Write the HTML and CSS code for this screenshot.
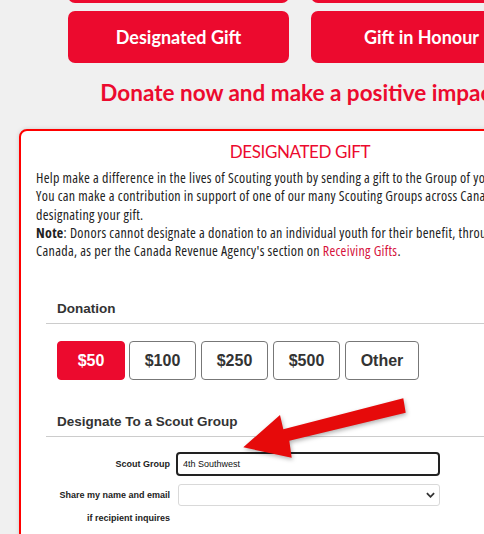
FILE: index.html
```html
<!DOCTYPE html>
<html lang="en">
<head>
    <meta charset="UTF-8">
    <meta name="viewport" content="width=device-width, initial-scale=1.0">
    <title>Designated Gift</title>
    <link rel="stylesheet" href="styles.css">
</head>
<body>
    <div class="page">
        <div class="gift-types">
            <a class="gift-btn" href="#">One-Time Gift</a>
            <a class="gift-btn" href="#">Monthly Gift</a>
            <a class="gift-btn" href="#">Designated Gift</a>
            <a class="gift-btn" href="#">Gift in Honour</a>
        </div>

        <h1 class="tagline">Donate now and make a positive impact</h1>

        <div class="card">
            <h2 class="card-title">DESIGNATED GIFT</h2>
            <p class="intro">
                Help make a difference in the lives of Scouting youth by sending a gift to the Group of your choice.<br>
                You can make a contribution in support of one of our many Scouting Groups across Canada by<br>
                designating your gift.<br>
                <b>Note</b>: Donors cannot designate a donation to an individual youth for their benefit, through Scouts<br>
                Canada, as per the Canada Revenue Agency's section on <a href="#">Receiving Gifts</a>.
            </p>

            <div class="form-section">
                <h3 class="section-title">Donation</h3>
                <div class="amounts">
                    <button class="amount active">$50</button>
                    <button class="amount">$100</button>
                    <button class="amount">$250</button>
                    <button class="amount">$500</button>
                    <button class="amount other">Other</button>
                </div>
            </div>

            <div class="form-section">
                <h3 class="section-title">Designate To a Scout Group</h3>
                <div class="field">
                    <label for="group">Scout Group</label>
                    <input id="group" class="text-input" type="text" value="4th Southwest">
                </div>
                <div class="field">
                    <label for="share">Share my name and email<br>if recipient inquires</label>
                    <div class="select-wrap">
                        <select id="share" class="select-input">
                            <option></option>
                            <option>Yes</option>
                            <option>No</option>
                        </select>
                        <svg class="chevron" viewBox="0 0 10 6"><path d="M1 1l4 4 4-4" fill="none" stroke="#333" stroke-width="2"/></svg>
                    </div>
                </div>
            </div>
        </div>
    </div>

    <!-- annotation arrow -->
    <svg class="arrow" viewBox="0 0 484 534">
        <polygon points="403.3,398.3 405.7,412.7 289.3,440.7 291.7,457.7 243.3,447.3 280,415 283.3,429.3" />
    </svg>
</body>
</html>
```

FILE: styles.css
```css
body {
    margin: 0;
    background: #f0f0f0;
    overflow: hidden;
    font-family: "Liberation Sans", Arial, sans-serif;
    color: #222;
}

.page {
    width: 562px;
    margin-left: 19px;
}

.gift-types {
    display: grid;
    grid-template-columns: 221px 221px;
    justify-content: center;
    gap: 8px 22px;
    margin-top: -49px;
}

.gift-btn {
    display: flex;
    align-items: center;
    justify-content: center;
    height: 52px;
    border-radius: 7px;
    background: #ec0a2e;
    color: #fff;
    font-family: Lato, "Open Sans", sans-serif;
    font-weight: bold;
    font-size: 18px;
    text-decoration: none;
}

.tagline {
    margin: 17px 0 0;
    text-align: center;
    white-space: nowrap;
    font-family: Lato, "Open Sans", sans-serif;
    font-size: 22.5px;
    line-height: 26px;
    color: #ec0a2e;
}

.card {
    margin-top: 23px;
    padding: 10px 15px 30px;
    background: #fff;
    border: 2px solid #ff0000;
    border-radius: 8px;
    box-shadow: 0 0 4px rgba(0, 0, 0, 0.15);
}

.card-title {
    margin: 0;
    text-align: center;
    font-family: Lato, "Open Sans", sans-serif;
    font-weight: normal;
    font-size: 17px;
    letter-spacing: -0.4px;
    line-height: 21px;
    color: #ec0a2e;
}

.intro {
    margin: 7px 0 0;
    font-family: "Liberation Sans Narrow", "Open Sans", sans-serif;
    font-stretch: condensed;
    font-size: 14px;
    letter-spacing: 0.3px;
    line-height: 18.3px;
    white-space: nowrap;
}

.intro a {
    color: #d6123c;
    text-decoration: none;
}

.form-section {
    margin: 41px 0 0 10px;
}

.form-section + .form-section {
    margin-top: 34px;
}

.section-title {
    margin: 0;
    padding: 0 11px 6px;
    border-bottom: 1px solid #ccc;
    font-size: 13.5px;
    line-height: 16px;
    color: #333;
}

.amounts {
    display: flex;
    gap: 5px;
    margin: 17px 0 0 11px;
}

.amount {
    width: 67px;
    height: 39px;
    padding: 0;
    background: #fff;
    border: 1px solid #777;
    border-radius: 4px;
    font-family: "Liberation Sans", Arial, sans-serif;
    font-weight: bold;
    font-size: 16px;
    color: #333;
}

.amount.active {
    width: 68px;
    margin-right: -1px;
    background: #ec0a2e;
    border-color: #ec0a2e;
    color: #fff;
}

.amount.other {
    width: 74px;
}

.field {
    display: grid;
    grid-template-columns: 113px 264px;
    column-gap: 6px;
    margin-left: 11px;
}

.form-section .field:first-of-type {
    margin-top: 15px;
}

.field + .field {
    margin-top: 8px;
}

.field label {
    text-align: right;
    font-size: 9px;
    font-weight: bold;
    line-height: 23px;
    color: #222;
}

.field:first-of-type label {
    line-height: 24px;
}

.text-input {
    box-sizing: border-box;
    height: 24px;
    padding: 0 5px;
    border: 2px solid #222;
    border-radius: 4px;
    font-family: "Liberation Sans", Arial, sans-serif;
    font-size: 9px;
    color: #111;
    outline: none;
}

.select-wrap {
    position: relative;
    margin-left: 2px;
    width: 262px;
}

.select-input {
    box-sizing: border-box;
    width: 100%;
    height: 22px;
    border: 1px solid #d9d9d9;
    border-radius: 3px;
    background: #fff;
    appearance: none;
}

.chevron {
    position: absolute;
    right: 5px;
    top: 8px;
    width: 9px;
    height: 6px;
}

.arrow {
    position: absolute;
    left: 0;
    top: 0;
    width: 484px;
    height: 534px;
    pointer-events: none;
    filter: drop-shadow(1px 2px 2px rgba(0, 0, 0, 0.3));
}

.arrow polygon {
    fill: #e60a0a;
}
```
